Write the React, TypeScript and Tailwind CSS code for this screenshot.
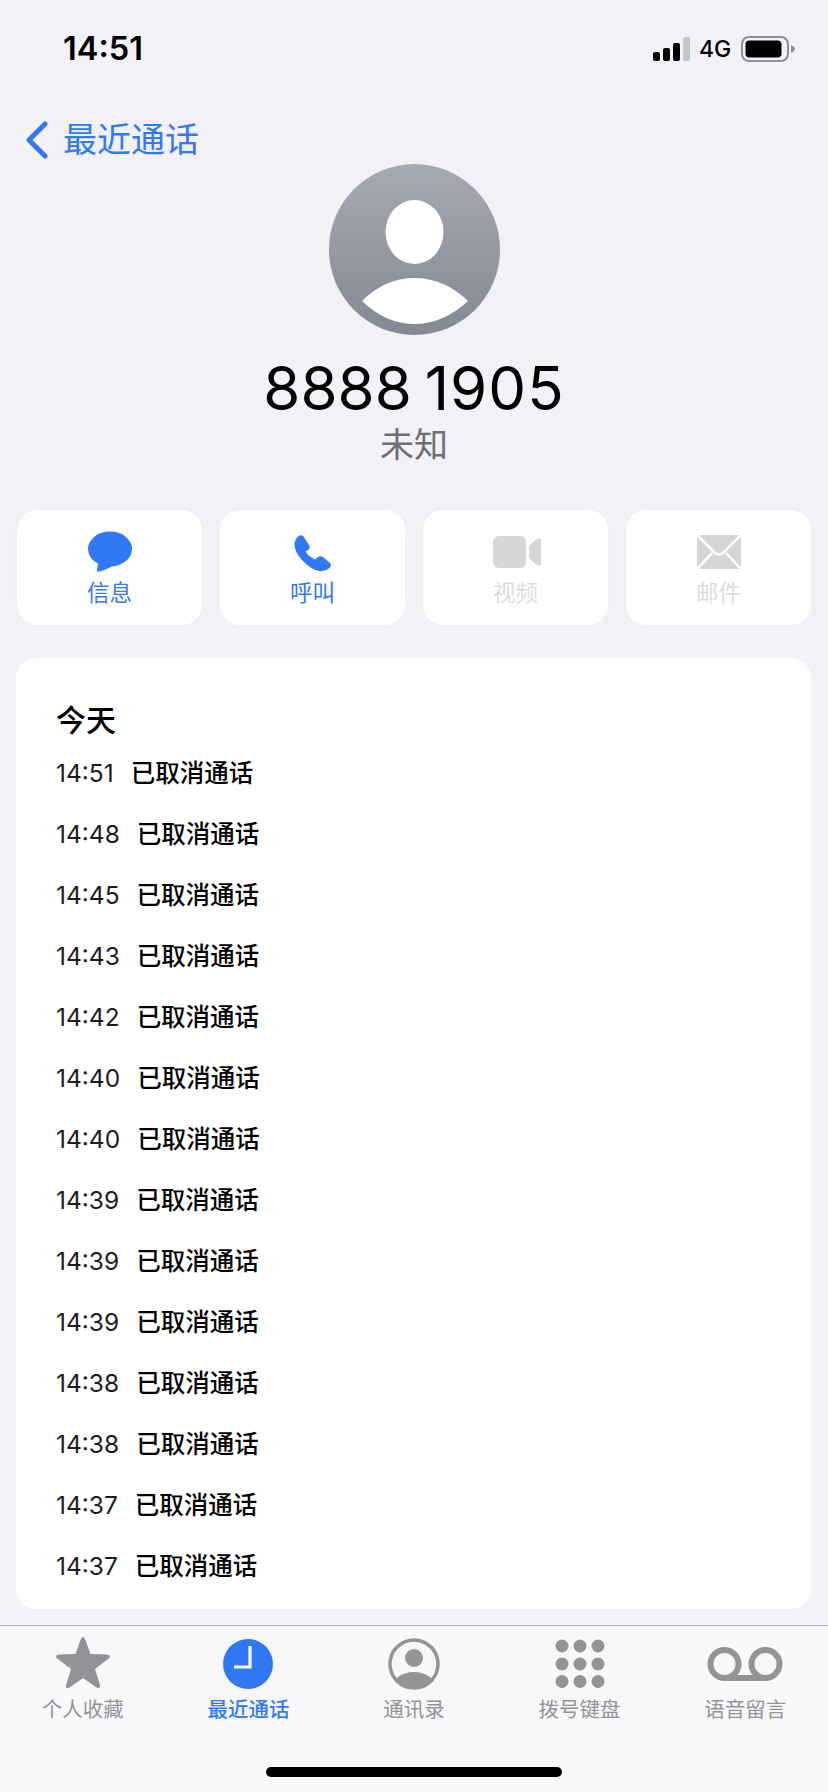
import React from "react";

const FONT = "font-['Inter','Noto_Sans_CJK_SC',sans-serif]";

const CALL_TIMES = [
  "14:51", "14:48", "14:45", "14:43", "14:42", "14:40", "14:40",
  "14:39", "14:39", "14:39", "14:38", "14:38", "14:37", "14:37",
];

function StatusBar() {
  return (
    <div className="h-[108px] flex justify-between items-start pl-[63px] pr-[32px] pt-[29px]">
      <span className="text-[32.5px] leading-[40px] font-semibold text-black">14:51</span>
      <div className="flex items-center h-[40px]">
        <svg width="38" height="24" viewBox="0 0 38 24" className="mr-[8px]">
          <rect x="0" y="15" width="7" height="9" rx="2" fill="#000" />
          <rect x="10" y="11" width="7" height="13" rx="2" fill="#000" />
          <rect x="20" y="6" width="7" height="18" rx="2" fill="#000" />
          <rect x="30" y="0" width="7" height="24" rx="2" fill="#c6c6c8" />
        </svg>
        <span className="text-[23px] leading-[40px] font-medium text-black w-[42px]">4G</span>
        <svg width="55" height="26" viewBox="0 0 55 26">
          <rect x="1" y="1" width="46" height="24" rx="7" fill="none" stroke="#8e8e93" strokeWidth="2" />
          <rect x="4.5" y="4.5" width="36" height="17" rx="4" fill="#000" />
          <path d="M50 9 Q54 11 54 13 Q54 15 50 17 Z" fill="#8e8e93" />
        </svg>
      </div>
    </div>
  );
}

function BackLink() {
  return (
    <div className="h-[56px] flex items-center pl-[25px] pt-[8px] text-[#3478f6]">
      <svg width="24" height="38" viewBox="0 0 24 38" className="mr-[14px]">
        <path d="M20 3 L4 19 L20 35" fill="none" stroke="#3478f6" strokeWidth="5" strokeLinecap="round" strokeLinejoin="round" />
      </svg>
      <span className="text-[34px] leading-[44px]">最近通话</span>
    </div>
  );
}

function ContactHeader() {
  return (
    <div className="flex flex-col items-center">
      <div className="w-[171px] h-[171px] rounded-full overflow-hidden bg-gradient-to-b from-[#a7a9b4] to-[#858994]">
        <svg width="171" height="171" viewBox="0 0 171 171">
          <ellipse cx="85.5" cy="68" rx="29" ry="32" fill="#fff" />
          <path d="M33 137 Q56 114 85.5 114 Q115 114 139 137 Q114 160 85.5 160 Q57 160 33 137 Z" fill="#fff" />
        </svg>
      </div>
      <div className="mt-[17px] h-[72px] text-[60px] leading-[72px] text-black [word-spacing:-4px]">
        8888 <span className="tracking-[1px]">1905</span>
      </div>
      <div className="-mt-[1px] h-[44px] text-[34px] leading-[44px] text-[#6d6d72]">未知</div>
    </div>
  );
}

function ActionButton({ label, enabled, children }: { label: string; enabled: boolean; children: React.ReactNode }) {
  return (
    <div className="w-[185px] h-[115px] rounded-[20px] bg-white flex flex-col items-center shadow-[0_0_10px_rgba(0,0,0,0.02)]">
      <div className="h-[68px] w-full flex justify-center pt-[21px]">{children}</div>
      <span className={`text-[22.5px] leading-[30px] ${enabled ? "text-[#3478f6]" : "text-[#dcdcdd]"}`}>{label}</span>
    </div>
  );
}

function ActionRow() {
  return (
    <div className="mt-[43px] px-[17px] flex justify-between">
      <ActionButton label="信息" enabled>
        <svg width="46" height="42" viewBox="0 0 46 42">
          <ellipse cx="23" cy="18" rx="22" ry="17.5" fill="#3178f4" />
          <path d="M12 29 L10 38 Q9 41 13 40.5 Q22 38 28 33 Z" fill="#3178f4" />
        </svg>
      </ActionButton>
      <ActionButton label="呼叫" enabled>
        <svg width="44" height="44" viewBox="0 0 44 44" className="-mt-[1px]">
          <path d="M7 6.5 Q10 4 12.5 6.5 L18 15 Q19.5 18 17.5 19.5 L14.5 21.5 Q17 26 24 29.5 L27 27 Q30 25.5 32.5 27.5 L39 33 Q41 35.5 38.5 38 Q34 42 28 41 Q20 39.5 12 31 Q4 23 3.5 15 Q3.5 10 7 6.5 Z" fill="#3178f4" />
        </svg>
      </ActionButton>
      <ActionButton label="视频" enabled={false}>
        <svg width="48" height="34" viewBox="0 0 48 34" className="mt-[5px] ml-[2px]">
          <rect x="0" y="0" width="33" height="32" rx="6" fill="#d6d6d8" />
          <path d="M36 12 Q36 10 38 8 L44 3 Q48 1 48 5 V27 Q48 31 44 29 L38 24 Q36 22 36 20 Z" fill="#d6d6d8" />
        </svg>
      </ActionButton>
      <ActionButton label="邮件" enabled={false}>
        <svg width="44" height="35" viewBox="0 0 44 35" className="mt-[4px]">
          <rect x="0" y="0" width="44" height="34" fill="#d6d6d8" />
          <path d="M0 0 L18 18 Q22 21 26 18 L44 0 M0 34 L15 18 M44 34 L29 18" fill="none" stroke="#fff" strokeWidth="2.5" />
        </svg>
      </ActionButton>
    </div>
  );
}

function CallLog() {
  return (
    <div className="mt-[33px] mx-[16px] w-[795px] h-[951px] rounded-[20px] bg-white pt-[40px] pl-[40px]">
      <div className="h-[44px] text-[30px] leading-[44px] font-medium text-black">今天</div>
      {CALL_TIMES.map((time, i) => (
        <div key={i} className="h-[61px] flex items-center text-black">
          <span className="text-[24.5px] leading-[30px] text-[#1c1c1e]">{time}</span>
          <span className="ml-[17px] text-[24.5px] leading-[30px] font-medium">已取消通话</span>
        </div>
      ))}
    </div>
  );
}

function TabItem({ label, active, children }: { label: string; active?: boolean; children: React.ReactNode }) {
  return (
    <div className="flex flex-col items-center">
      <div className="h-[68px] w-full flex items-center justify-center pt-[8px]">{children}</div>
      <span className={`mt-[2px] text-[20.5px] leading-[28px] ${active ? "font-medium text-[#3478f6]" : "text-[#949497]"}`}>{label}</span>
    </div>
  );
}

function TabBar() {
  return (
    <div className="mt-[16px] flex-1 border-t-[1.5px] border-[#b5b5b9] bg-[#f8f8fa] flex flex-col">
      <div className="grid grid-cols-5">
        <TabItem label="个人收藏">
          <svg width="56" height="54" viewBox="0 0 56 54" className="-mt-[4px]">
            <path d="M28 2 Q29.5 2 30.5 5 L35.5 19 L52 19.5 Q55 20 55 21.5 Q55 23 52.5 24.5 L40 34 L45 50 Q45.5 53 43.5 53 Q42 53 40 51.5 L28 43 L16 51.5 Q14 53 12.5 53 Q10.5 53 11 50 L16 34 L3.5 24.5 Q1 23 1 21.5 Q1 20 4 19.5 L20.5 19 L25.5 5 Q26.5 2 28 2 Z" fill="#929396" />
          </svg>
        </TabItem>
        <TabItem label="最近通话" active>
          <svg width="50" height="50" viewBox="0 0 50 50">
            <circle cx="25" cy="25" r="25" fill="#3178f4" />
            <path d="M27 7 V28 H11" fill="none" stroke="#fff" strokeWidth="3.2" />
          </svg>
        </TabItem>
        <TabItem label="通讯录">
          <svg width="52" height="52" viewBox="0 0 52 52">
            <defs>
              <clipPath id="contact-disc">
                <circle cx="26" cy="26" r="24" />
              </clipPath>
            </defs>
            <circle cx="26" cy="26" r="24" fill="none" stroke="#949497" strokeWidth="3.5" />
            <circle cx="26" cy="20" r="9" fill="#949497" />
            <ellipse cx="26" cy="50" rx="22" ry="16" fill="#949497" clipPath="url(#contact-disc)" />
          </svg>
        </TabItem>
        <TabItem label="拨号键盘">
          <svg width="50" height="50" viewBox="0 0 50 50" fill="#949497">
            <circle cx="7" cy="7" r="6.5" />
            <circle cx="25" cy="7" r="6.5" />
            <circle cx="43" cy="7" r="6.5" />
            <circle cx="7" cy="25" r="6.5" />
            <circle cx="25" cy="25" r="6.5" />
            <circle cx="43" cy="25" r="6.5" />
            <circle cx="7" cy="42.5" r="6.5" />
            <circle cx="25" cy="42.5" r="6.5" />
            <circle cx="43" cy="42.5" r="6.5" />
          </svg>
        </TabItem>
        <TabItem label="语音留言">
          <svg width="76" height="36" viewBox="0 0 76 36">
            <circle cx="17.5" cy="18" r="14" fill="none" stroke="#949497" strokeWidth="6" />
            <circle cx="58.5" cy="18" r="14" fill="none" stroke="#949497" strokeWidth="6" />
            <path d="M17.5 32 H58.5" stroke="#949497" strokeWidth="6" />
          </svg>
        </TabItem>
      </div>
      <div className="mt-[43px] w-[296px] h-[10px] mx-auto rounded-full bg-black" />
    </div>
  );
}

export default function App() {
  return (
    <div className={`w-[828px] h-[1792px] bg-[#f1f1f6] flex flex-col overflow-hidden ${FONT}`}>
      <StatusBar />
      <BackLink />
      <ContactHeader />
      <ActionRow />
      <CallLog />
      <TabBar />
    </div>
  );
}
